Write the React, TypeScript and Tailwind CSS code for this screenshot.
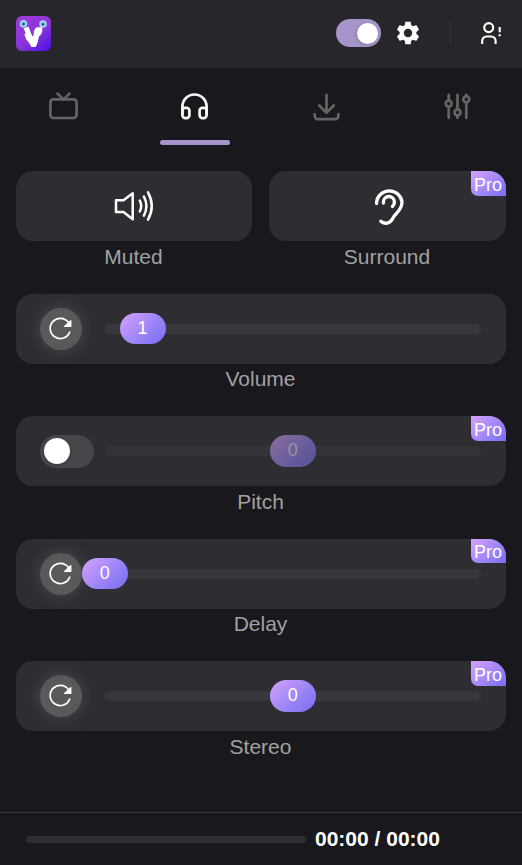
import type { ReactNode } from "react";

function Logo() {
  return (
    <svg width="35" height="35" viewBox="0 0 35 35">
      <defs>
        <linearGradient id="logo" x1="0.25" y1="0.1" x2="0.95" y2="1">
          <stop offset="0" stopColor="#9a3bd8" />
          <stop offset="0.5" stopColor="#8533d8" />
          <stop offset="1" stopColor="#4a10e4" />
        </linearGradient>
      </defs>
      <rect width="35" height="35" rx="6" fill="url(#logo)" />
      <path d="M7.5 12 12.5 10.8 14 14.5 15 17.5 16.8 20.5 17.8 18.5 17.8 15 20 11.5 26 11 26.4 15 25 18.5 23 20.5 21.3 27.5 19.6 31 15.3 31 13.8 28 10 23 8.5 18.5 9.6 17Z" fill="#fff" />
      <circle cx="7.5" cy="7.8" r="3.8" fill="#a5d4f0" />
      <circle cx="7.4" cy="8" r="2" fill="#62b2dc" />
      <circle cx="7.6" cy="8.1" r="1" fill="#123a68" />
      <circle cx="27" cy="8" r="3.8" fill="#a5d4f0" />
      <circle cx="27" cy="8.2" r="2" fill="#62b2dc" />
      <circle cx="27" cy="8.3" r="1" fill="#123a68" />
    </svg>
  );
}

function Gear() {
  return (
    <svg width="28" height="28" viewBox="0 0 24 24" fill="#fff">
      <path d="M19.14 12.94c.04-.3.06-.61.06-.94 0-.32-.02-.64-.07-.94l2.03-1.58c.18-.14.23-.41.12-.61l-1.92-3.32c-.12-.22-.37-.29-.59-.22l-2.39.96c-.5-.38-1.03-.7-1.62-.94l-.36-2.54c-.04-.24-.24-.41-.48-.41h-3.84c-.24 0-.43.17-.47.41l-.36 2.54c-.59.24-1.13.57-1.62.94l-2.39-.96c-.22-.08-.47 0-.59.22L2.74 8.87c-.12.21-.08.47.12.61l2.03 1.58c-.05.3-.09.63-.09.94s.02.64.07.94l-2.03 1.58c-.18.14-.23.41-.12.61l1.92 3.32c.12.22.37.29.59.22l2.39-.96c.5.38 1.03.7 1.62.94l.36 2.54c.05.24.24.41.48.41h3.84c.24 0 .44-.17.47-.41l.36-2.54c.59-.24 1.13-.56 1.62-.94l2.39.96c.22.08.47 0 .59-.22l1.92-3.32c.12-.22.07-.47-.12-.61zM12 15.6A3.6 3.6 0 1 1 12 8.4a3.6 3.6 0 0 1 0 7.2z" />
    </svg>
  );
}

function UserAlert() {
  return (
    <svg width="22" height="24" viewBox="0 0 22 24" fill="none" stroke="#fff" strokeWidth="2.1">
      <circle cx="8.7" cy="6.6" r="4.5" />
      <path d="M2.2 23v-3.2a4.3 4.3 0 0 1 4.3-4.3h4.8a4.3 4.3 0 0 1 4.3 4.3V23" />
      <path d="M19.7 6v5.3M19.7 13.2v2" />
    </svg>
  );
}

function Outline({ children, color = "#646466" }: { children: ReactNode; color?: string }) {
  return (
    <svg width="32" height="32" viewBox="0 0 32 32" fill="none" stroke={color} strokeWidth="2.7" strokeLinecap="round" strokeLinejoin="round">
      {children}
    </svg>
  );
}

function Tabs() {
  return (
    <nav className="-ml-0.5 grid w-[524px] shrink-0 grid-cols-4">
      <div className="flex h-[77px] justify-center pt-[22px]">
        <Outline>
          <rect x="2.4" y="9.4" width="26.2" height="18.6" rx="3" />
          <path d="m9.5 3.6 6 5.8 6-5.8" />
        </Outline>
      </div>
      <div className="flex h-[77px] flex-col items-center justify-between pt-[22px]">
        <Outline color="#f7f7f8">
          <path d="M3.4 23.8V16.6a12 12 0 0 1 24.2 0V23.8" />
          <rect x="3.4" y="17.8" width="7" height="10.3" rx="2.8" />
          <rect x="20.6" y="17.8" width="7" height="10.3" rx="2.8" />
        </Outline>
        <div className="h-[5px] w-[70px] rounded-full bg-[#a794ca]" />
      </div>
      <div className="flex h-[77px] justify-center pt-[22px] pl-0.5">
        <Outline>
          <path d="M15.5 4.9v17.6M8.2 15.5l7.3 7.2 7.3-7.2M3.7 24v2.2a3 3 0 0 0 3 3h17.6a3 3 0 0 0 3-3V24" />
        </Outline>
      </div>
      <div className="flex h-[77px] justify-center pt-[22px] pl-0.5">
        <Outline>
          <path d="M6.7 4.8v5.3M6.7 17.2v10.6M15.5 4.8v14.1M15.5 26v1.8M24.3 4.8v1.1M24.3 12.8v15" />
          <circle cx="6.7" cy="13.6" r="3" />
          <circle cx="15.5" cy="22.4" r="3" />
          <circle cx="24.3" cy="9.3" r="3" />
        </Outline>
      </div>
    </nav>
  );
}

function ProBadge() {
  return (
    <span className="absolute top-0 right-0 h-[24.5px] w-[35px] rounded-tr-[17px] rounded-bl-[7px] bg-linear-135 from-[#d9a1fb] to-[#776df3] pt-[3.9px] pl-[3px] text-[18px] leading-5 text-white">
      Pro
    </span>
  );
}

function Card({ label, pro, children }: { label: string; pro?: boolean; children: ReactNode }) {
  return (
    <section className="h-[98px] min-w-0 shrink-0">
      <div className="relative flex h-[70px] items-center rounded-[17px] bg-[#2e2d32]">
        {children}
        {pro && <ProBadge />}
      </div>
      <p className="pt-[3.9px] pr-px text-center text-[21px] leading-6 text-[#a1a1a3]">{label}</p>
    </section>
  );
}

function ResetButton() {
  return (
    <button className="flex size-[42px] shrink-0 items-center justify-center rounded-full bg-[#59595b] shadow-[0_0_14px_2px_#59595b88]">
      <svg width="26" height="26" viewBox="0 0 26 26" fill="none" stroke="#fff" strokeWidth="1.7" strokeLinecap="round">
        <path d="M20.3 6.3A10.1 10.1 0 1 0 21.7 16.1" />
        <path d="M16.6 10.4 22.8 4.8v5.6Z" fill="#fff" strokeLinejoin="round" strokeWidth="1.3" />
      </svg>
    </button>
  );
}

function Slider({ value, left, disabled }: { value: number; left: number; disabled?: boolean }) {
  return (
    <div className={`relative h-2.5 w-[376px] rounded-full ${disabled ? "bg-[#343337]" : "bg-[#38373c]"}`}>
      <span
        className={`absolute -top-[10.7px] flex h-[31.5px] w-[46px] items-center justify-center rounded-full bg-linear-135 pb-px text-[18px] ${
          disabled ? "from-[#8b6c9e] to-[#51519a] text-[#9a969d]" : "from-[#d4a1fb] to-[#746cf1] text-white"
        }`}
        style={{ left }}
      >
        {value}
      </span>
    </div>
  );
}

export default function App() {
  return (
    <main className="flex h-[865px] w-[522px] flex-col overflow-hidden bg-[#19181c] font-['Liberation_Sans',Arial,sans-serif]">
      <header className="flex h-[68px] shrink-0 items-center bg-[#27262b] pr-5 pb-0.5 pl-4">
        <Logo />
        <div className="ml-auto flex h-7 w-[45px] items-center justify-end rounded-full bg-[#a794ca] pr-[3px]">
          <span className="size-[21px] rounded-full bg-white shadow-[-1px_1px_3px_#0003]" />
        </div>
        <span className="ml-[13px]">
          <Gear />
        </span>
        <div className="ml-7 h-6 w-px bg-[#333237]" />
        <span className="ml-[29px]">
          <UserAlert />
        </span>
      </header>
      <Tabs />
      <div className="flex flex-1 flex-col gap-[24.5px] px-4 pt-[26px]">
        <div className="grid grid-cols-[236px_237px] gap-[17px]">
          <Card label="Muted">
            <svg className="ml-[97px]" width="42" height="34" viewBox="0 0 42 34" fill="none" stroke="#fff" strokeWidth="2.5" strokeLinecap="round" strokeLinejoin="round">
              <path d="M3 11.2h7.5l9.2-7v26l-9.2-7.2H3ZM26.8 11.5q2.8 5.5 0 11M30.9 7.5q5 9.6 0 19.2M35 3.4q7.6 13.6 0 27.2" />
            </svg>
          </Card>
          <Card label="Surround" pro>
            <svg className="ml-[101px]" width="38" height="40" viewBox="0 0 38 40" fill="none" stroke="#fff" strokeWidth="3.3" strokeLinecap="round" strokeLinejoin="round">
              <path d="M6.6 17.5v-1.6a12.8 12.6 0 0 1 25.4 0c0 9-7.2 11.3-9.4 16.8-2.1 5-8.5 5.8-11.8 2.6" />
              <path d="M13.4 17v-1a5.5 5.5 0 0 1 11 0c0 1.7-.6 3.3-2 4.5" />
            </svg>
          </Card>
        </div>
        <Card label="Volume">
          <div className="flex items-center gap-[23px] pl-6">
            <ResetButton />
            <Slider value={1} left={14.5} />
          </div>
        </Card>
        <Card label="Pitch" pro>
          <div className="flex items-center gap-[11px] pl-6">
            <div className="flex h-[33px] w-[54px] items-center rounded-full bg-[#47464b] pl-1">
              <span className="size-[26px] rounded-full bg-white shadow-[1px_1px_3px_#0003]" />
            </div>
            <Slider value={0} left={164.7} disabled />
          </div>
        </Card>
        <Card label="Delay" pro>
          <div className="flex items-center gap-[23px] pl-6">
            <ResetButton />
            <Slider value={0} left={-23.3} />
          </div>
        </Card>
        <Card label="Stereo" pro>
          <div className="flex items-center gap-[23px] pl-6">
            <ResetButton />
            <Slider value={0} left={164.7} />
          </div>
        </Card>
      </div>
      <footer className="flex h-[53px] shrink-0 items-center border-t border-[#38373b] pl-[26px]">
        <div className="h-[7px] w-[280px] rounded-full bg-[#2e2f32]" />
        <span className="ml-[9px] text-[21px] leading-6 font-bold text-white">00:00 / 00:00</span>
      </footer>
    </main>
  );
}
